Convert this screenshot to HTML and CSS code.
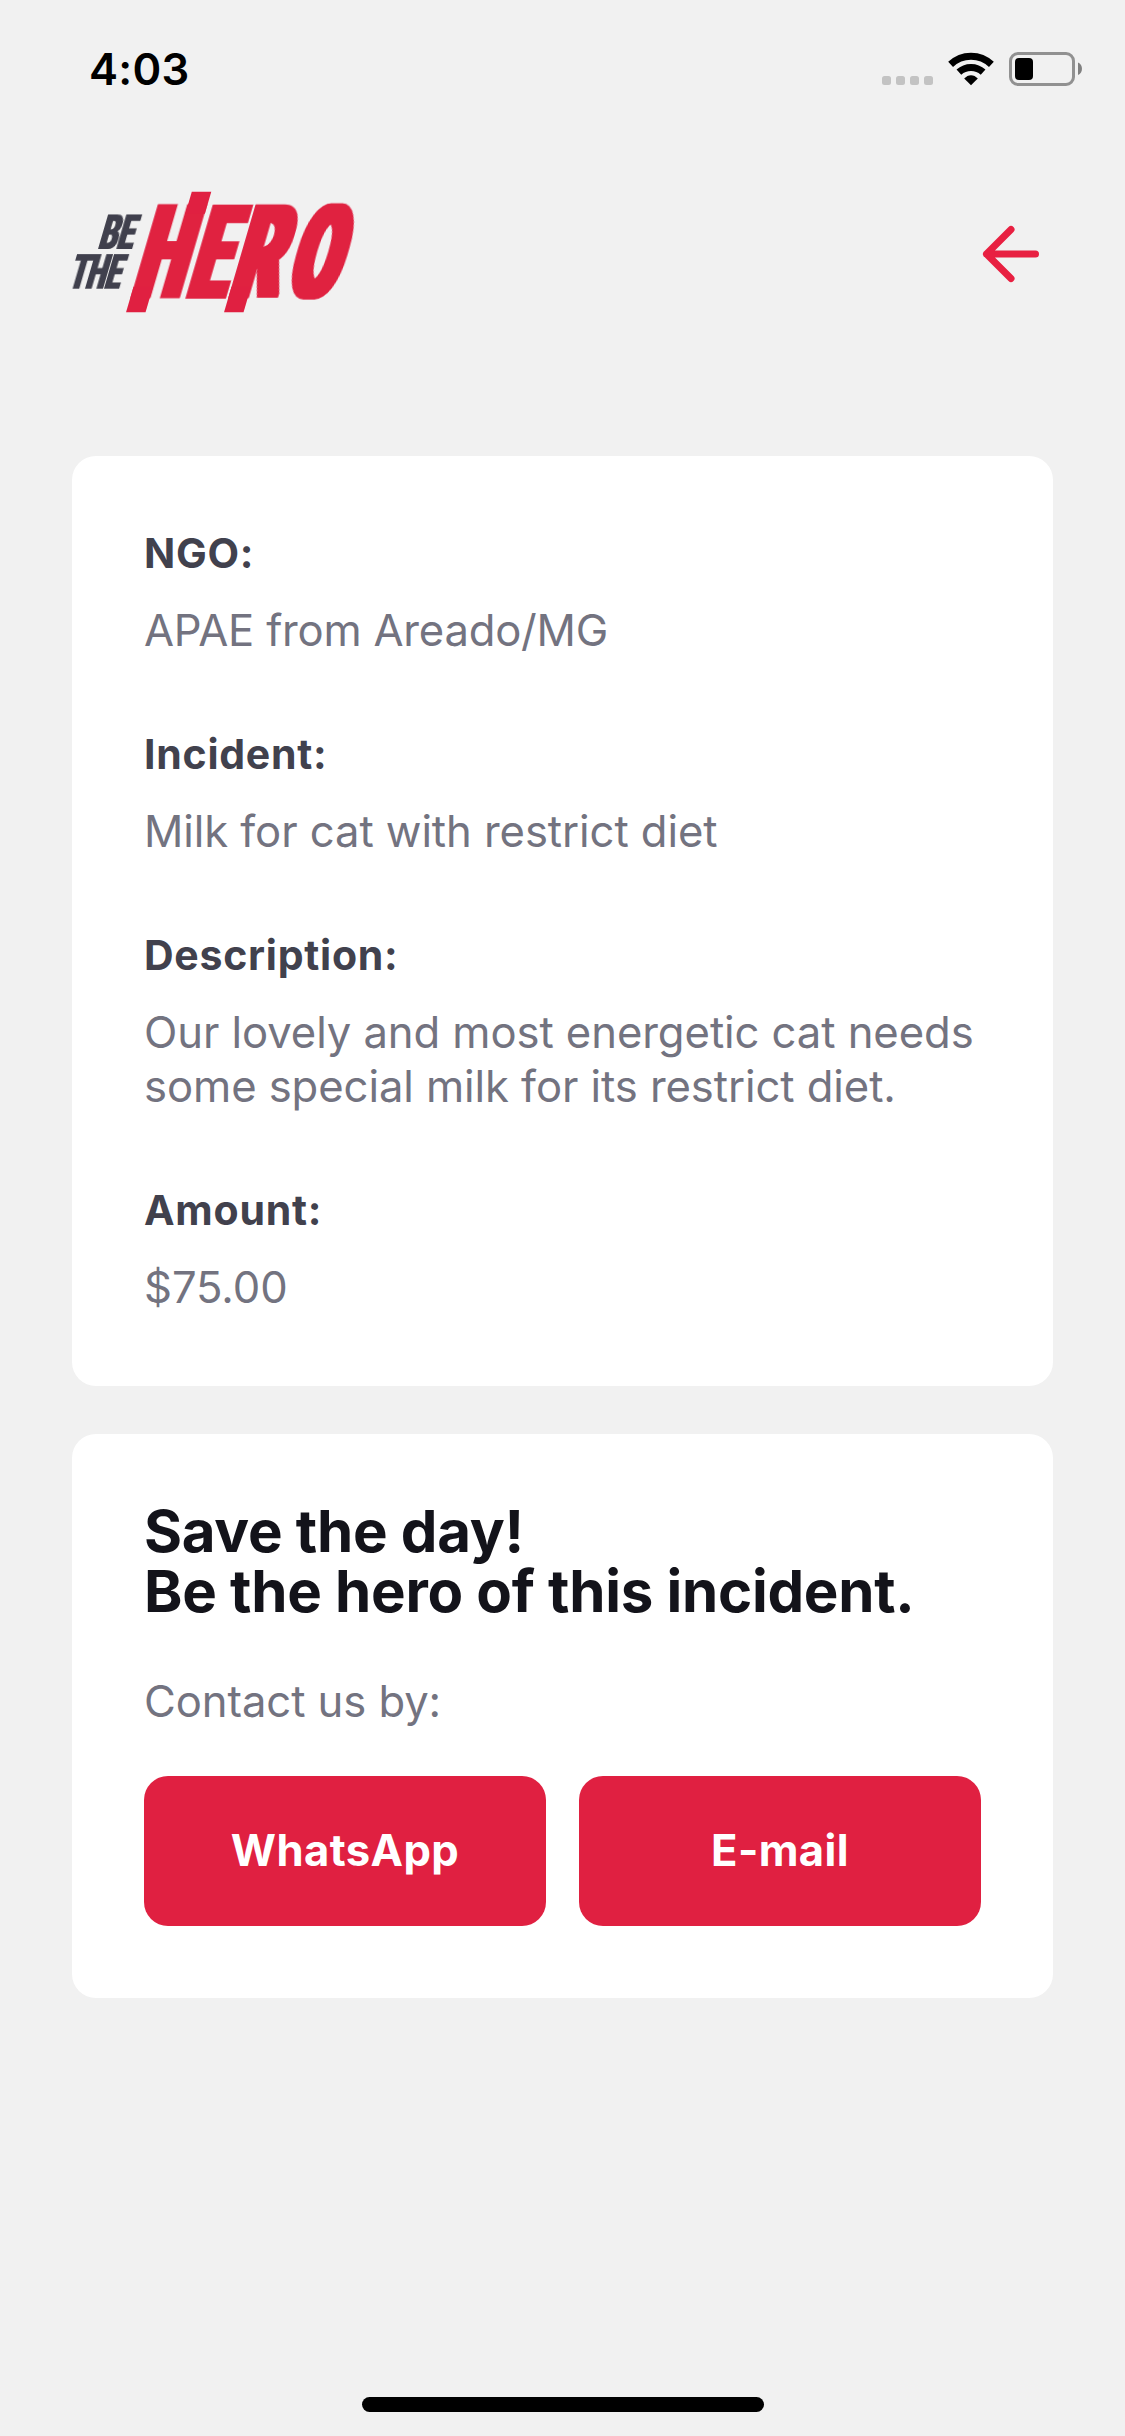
FILE: index.html
```html
<!DOCTYPE html>
<html lang="en">
<head>
<meta charset="utf-8">
<title>Be The Hero</title>
<link rel="stylesheet" href="styles.css">
</head>
<body>
<div class="screen">
  <div class="status">
    <span class="time">4:03</span>
    <svg class="indicators" width="204" height="36" viewBox="880 51 204 36" aria-hidden="true">
      <g fill="#c3c3c3">
        <rect x="882" y="76" width="9" height="9" rx="2.5"/>
        <rect x="896" y="76" width="9" height="9" rx="2.5"/>
        <rect x="910" y="76" width="9" height="9" rx="2.5"/>
        <rect x="924" y="76" width="9" height="9" rx="2.5"/>
      </g>
      <g fill="none" stroke="#000" stroke-width="7">
        <path d="M950.6 64.4A29.5 29.5 0 0 1 991.4 64.4"/>
        <path d="M958.9 72.2A18 18 0 0 1 983.1 72.2"/>
      </g>
      <path d="M964.2 78.5C968.2 74 973.8 74 977.8 78.5L971 85.2Z"/>
      <rect x="1010.5" y="53.5" width="63" height="31" rx="7.5" fill="none" stroke="#919191" stroke-width="3"/>
      <rect x="1015" y="58" width="18" height="22" rx="4"/>
      <path d="M1078 62.5C1083.300 64.500 1083.300 73 1078 75Z" fill="#808080"/>
    </svg>
  </div>

  <header class="header">
    <svg class="logo" width="290" height="120" viewBox="72 192 290 120" role="img" aria-label="Be The Hero">
      <defs>
        <filter id="heavy" x="-10%" y="-10%" width="120%" height="120%"><feMorphology operator="dilate" radius="5 2"/></filter>
        <filter id="heavy-sm" x="-10%" y="-10%" width="120%" height="120%"><feMorphology operator="dilate" radius="1 0"/></filter>
      </defs>
      <g class="small">
        <g transform="translate(0 249) skewX(-16.3)"><text filter="url(#heavy-sm)" x="97.500" y="0" textLength="34" lengthAdjust="spacingAndGlyphs">BE</text></g>
        <g transform="translate(0 288.700) skewX(-16.3)"><text filter="url(#heavy-sm)" x="67.500" y="0" textLength="51" lengthAdjust="spacingAndGlyphs">THE</text></g>
      </g>
      <g class="big" transform="translate(0 298.700) skewX(-16.3)">
        <text filter="url(#heavy)" y="-2"><tspan x="131" textLength="48" lengthAdjust="spacingAndGlyphs">H</tspan><tspan x="186.300" textLength="36" lengthAdjust="spacingAndGlyphs">E</tspan><tspan x="228.500" textLength="46" lengthAdjust="spacingAndGlyphs">R</tspan><tspan x="285.500" textLength="47" lengthAdjust="spacingAndGlyphs">O</tspan></text>
        <rect x="160.500" y="-107" width="19.500" height="22"/>
        <rect x="130" y="-12" width="19.500" height="25.500"/>
        <rect x="228" y="-12" width="19.500" height="25.500"/>
      </g>
    </svg>
    <svg class="back" width="84" height="84" viewBox="0 0 24 24" fill="none" stroke="#e82041" stroke-width="2" stroke-linecap="round" stroke-linejoin="round"><path d="M19 12H5M12 19l-7-7 7-7"/></svg>
  </header>

  <main>
    <section class="card incident">
      <h2 class="label">NGO:</h2>
      <p class="value tight">APAE from Areado/MG</p>
      <h2 class="label">Incident:</h2>
      <p class="value">Milk for cat with restrict diet</p>
      <h2 class="label">Description:</h2>
      <p class="value">Our lovely and most energetic cat needs some special milk for its restrict diet.</p>
      <h2 class="label">Amount:</h2>
      <p class="value">$75.00</p>
    </section>

    <section class="card contact">
      <h1 class="title">Save the day!<br>Be the hero of this incident.</h1>
      <p class="value hint">Contact us by:</p>
      <div class="actions">
        <a class="action">WhatsApp</a>
        <a class="action">E-mail</a>
      </div>
    </section>
  </main>
  <div class="home"></div>
</div>
</body>
</html>
```
FILE: styles.css
```css
* { box-sizing: border-box; margin: 0; padding: 0; }

body {
  background: #f1f1f1;
  font-family: Inter, "Liberation Sans", sans-serif;
}

.screen {
  display: flex;
  flex-direction: column;
  width: 1125px;
  height: 2436px;
  padding-bottom: 24px;
}

.status {
  display: flex;
  justify-content: space-between;
  align-items: flex-start;
  height: 192px;
  padding: 41px 41px 0 89px;
}

.time {
  margin-top: 2px;
  font-size: 43.6px;
  font-weight: 600;
  line-height: 54px;
  letter-spacing: 0.3px;
}

.indicators { margin-top: 10px; }

.header {
  display: flex;
  justify-content: space-between;
  align-items: flex-start;
  height: 264px;
  padding: 0 72px;
}

.logo { overflow: visible; }
.back { margin-top: 20px; }

.logo text { font-family: Roboto, Inter, sans-serif; }
.small { fill: #41414d; }
.small text { font-size: 47.5px; font-weight: 900; }
.big { fill: #e02041; }
.big text { font-size: 126.6px; font-weight: 700; }

main {
  display: flex;
  flex-direction: column;
  gap: 48px;
  padding: 0 72px;
}

.card {
  padding: 72px;
  border-radius: 24px;
  background: #fff;
}

.label {
  color: #41414d;
  font-size: 41px;
  font-weight: 700;
  line-height: 50px;
  letter-spacing: 0.75px;
}

.value {
  margin-top: 26px;
  color: #737380;
  font-size: 43.6px;
  line-height: 54px;
  letter-spacing: -0.07px;
}

.tight { letter-spacing: -0.22px; }

.value + .label { margin-top: 71px; }

.incident { padding-bottom: 71px; }

.contact { padding-top: 67px; }

.title {
  color: #13131a;
  font-size: 58.2px;
  font-weight: 700;
  line-height: 60px;
  letter-spacing: -0.28px;
}

.hint { margin-top: 54px; }

.actions {
  display: flex;
  justify-content: space-between;
  margin-top: 47px;
}

.action {
  width: 402px;
  height: 150px;
  border-radius: 24px;
  background: #e02041;
  color: #fff;
  font-size: 43.6px;
  font-weight: 700;
  line-height: 149px;
  letter-spacing: 0.4px;
  text-align: center;
}

.home {
  width: 402px;
  height: 15px;
  margin: auto auto 0 362px;
  border-radius: 8px;
  background: #000;
}
```
